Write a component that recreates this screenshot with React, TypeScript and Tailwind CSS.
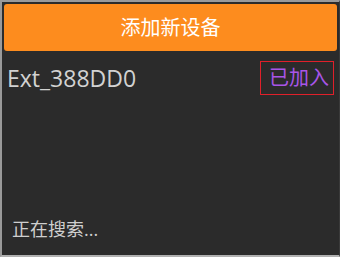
import React from "react";

const App: React.FC = () => {
  return (
    <div
      className="flex h-[257px] w-[340px] flex-col border-l-2 border-t-2 border-b-2 border-r border-l-[#9a9a9a] border-t-[#9a9a9a] border-b-[#b0b0b0] border-r-[#3a3a3a] bg-[#2b2b2b]"
      style={{ fontFamily: '"Open Sans", "Noto Sans CJK SC", sans-serif' }}
    >
      <div className="px-[2px] pt-[2px]">
        <button className="flex h-[47px] w-full items-center justify-center rounded-[3px] bg-[#fd8c1e] pt-[1px] text-[20px] text-white">
          添加新设备
        </button>
      </div>
      <div className="mt-[10px] flex items-center justify-between pl-[5px] pr-[5px]">
        <span className="text-[23px] leading-[34px] text-[#d2d2d2]">Ext_388DD0</span>
        <span className="flex h-[34px] w-[74px] items-center justify-center border border-[#e0202a] pl-[4px] text-[20px] text-[#a855e8]">
          已加入
        </span>
      </div>
      <div className="flex-1" />
      <div className="pb-[12px] pl-[10px] text-[18px] text-[#cfcfcf]">正在搜索...</div>
    </div>
  );
};

export default App;
